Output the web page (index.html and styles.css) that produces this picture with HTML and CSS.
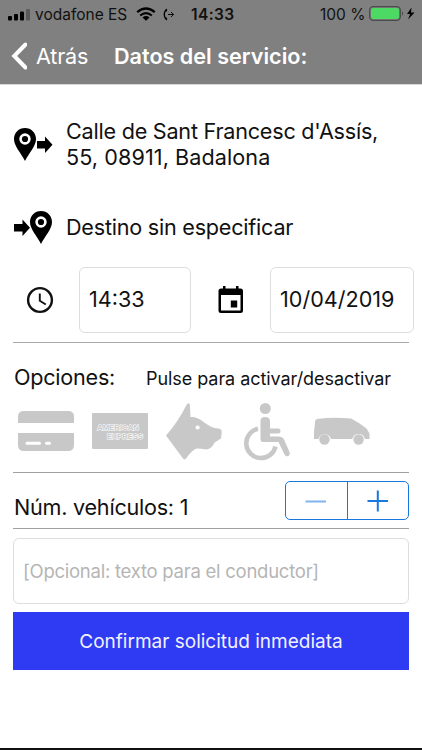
FILE: index.html
```html
<!DOCTYPE html>
<html lang="es">
<head>
<meta charset="utf-8">
<title>Datos del servicio</title>
<link rel="stylesheet" href="styles.css">
</head>
<body>
<header class="header">
  <div class="status">
    <svg class="signal" width="22" height="12" viewBox="0 0 22 12"><rect x="0" y="7" width="4" height="4.500" rx="1"/><rect x="6" y="5" width="4" height="6.500" rx="1"/><rect x="12" y="2.500" width="4" height="9" rx="1"/><rect x="18" y="0" width="4" height="11.500" rx="1" opacity=".3"/></svg>
    <span class="carrier">vodafone ES</span>
    <svg class="wifi" width="20" height="14" viewBox="0 0 20 14"><path d="M1.200 5.200Q10-2.200 18.800 5.200M4.200 8.500Q10 3.800 15.800 8.500" fill="none" stroke="#000" stroke-width="2.200"/><path d="M6.500 10.500Q10 7.700 13.500 10.500L10 13.800Z"/></svg>
    <svg class="forward" width="12" height="13" viewBox="0 0 12 13"><path d="M3.500 .6C-.3 3.500-.3 9.500 3.500 12.400L4.300 11 3.300 9.200H2.500C1.800 7.400 1.800 5.600 2.500 3.800H3.300L4.300 2Z"/><path d="M5 6.500H10.500M8 4l2.600 2.500L8 9" fill="none" stroke="#000" stroke-width=".9"/></svg>
    <span class="clock">14:33</span>
    <span class="percent">100 %</span>
    <svg class="battery" width="48" height="16" viewBox="0 0 48 16"><rect x=".7" y=".7" width="30.600" height="13.600" rx="3.500" fill="none" stroke="#4b4b4b" stroke-width="1.300"/><rect x="2" y="2" width="28" height="11" rx="2.200" fill="#4cd964"/><path d="M33 5Q35 7.500 33 10Z" fill="#444"/><path d="M42.500 1.500L38 8h3.200L39 13.500 45.500 6.500H42Z"/></svg>
  </div>
  <nav class="nav">
    <svg class="chevron" width="17" height="30" viewBox="0 0 17 30"><path d="M15.500 3.500L4.200 15 15.500 26.500" fill="none" stroke="#fff" stroke-width="4" stroke-linecap="round"/></svg>
    <span class="back">Atrás</span>
    <h1 class="title">Datos del servicio:</h1>
  </nav>
</header>
<main class="main">
  <section class="place origin">
    <svg width="40" height="34" viewBox="0 0 40 34"><path fill-rule="evenodd" d="M11 0C4.800 0 0 4.800 0 11 0 18 7 25 11 33 15 25 22 18 22 11 22 4.800 17.200 0 11 0ZM11 5.300A5.700 5.700 0 1 1 11 16.700 5.700 5.700 0 1 1 11 5.300Z"/><circle cx="11" cy="11" r="3.100"/><path d="M23 13H31V8.500L38.500 16.800 31 25V20.500H23Z"/></svg>
    <p class="address">Calle de Sant Francesc d'Assís,<br><span class="locality">55, 08911, Badalona</span></p>
  </section>
  <section class="place target">
    <svg width="40" height="34" viewBox="0 0 40 34"><path fill-rule="evenodd" d="M27 0C20.800 0 16 4.800 16 11 16 18 23 25 27 33 31 25 38 18 38 11 38 4.800 33.200 0 27 0ZM27 5.300A5.700 5.700 0 1 1 27 16.700 5.700 5.700 0 1 1 27 5.300Z"/><circle cx="27" cy="11" r="3.100"/><path d="M0 13H8.500V8.500L16 16.800 8.500 25V20.500H0Z"/></svg>
    <p class="destination">Destino sin especificar</p>
  </section>
  <section class="when">
    <svg class="clock-icon" width="28" height="28" viewBox="0 0 28 28"><circle cx="14" cy="14" r="11.900" fill="none" stroke="#111" stroke-width="2.400"/><path d="M13.800 7.500V14.800L19.800 18.500" fill="none" stroke="#111" stroke-width="1.900"/></svg>
    <div class="field time">14:33</div>
    <svg class="calendar-icon" width="26" height="28" viewBox="0 0 26 28"><path fill-rule="evenodd" d="M5 0H7.500V2.500H18V0H20.500V2.500H22.500Q25 2.500 25 5V24.500Q25 27 22.500 27H3Q.500 27 .500 24.500V5Q.500 2.500 3 2.500H5ZM3 9V24.500H22.500V9Z"/><rect x="12.800" y="14.500" width="6.400" height="7"/></svg>
    <div class="field date">10/04/2019</div>
  </section>
  <section class="options">
    <div class="options-head"><h2 class="label options-label">Opciones:</h2><span class="hint">Pulse para activar/desactivar</span></div>
    <div class="icons">
      <svg width="56" height="60" viewBox="0 0 56 60"><path d="M0 22V15.500Q0 10 6 10H50Q56 10 56 15.500V22ZM0 32H56V44Q56 50 50 50H6Q0 50 0 44Z"/><path d="M9 42.200H21.500M28.500 42.200H31.500" stroke="#fff" stroke-width="3" stroke-linecap="round"/></svg>
      <svg width="56" height="60" viewBox="0 0 56 60"><rect y="12" width="56" height="36" rx="1"/><g class="amex"><text x="5" y="28.500" textLength="42" lengthAdjust="spacingAndGlyphs">AMERICAN</text><text x="15" y="37.500" textLength="36" lengthAdjust="spacingAndGlyphs">EXPRESS</text></g></svg>
      <svg width="56" height="60" viewBox="0 0 56 60"><path d="M0 34.500Q12 21 20.500 4Q21.800 1.200 23.800 3L24.500 16Q31 15.500 37 20.500Q45 27 52 27.500Q56 27.500 55.700 31.500L55 37.500 51 40Q48.500 41 48 42.500Q45.500 48 40 48.500Q35 47.500 31 47.500Q26 48.500 20.500 57Q18.800 59.500 17 57.500Z"/><circle cx="31.600" cy="26.500" r="2.100" fill="#fff"/></svg>
      <svg width="56" height="60" viewBox="0 0 56 60"><circle cx="25.300" cy="7.500" r="5.500"/><path d="M18 27.800A14.800 14.800 0 1 0 35.500 45.500" fill="none" stroke="#c8c8c8" stroke-width="4.500"/><path d="M20.500 19.500Q20.500 16 25 16Q30 16 30 20V27.500H38Q40.500 27.500 40.500 30T38 32.500H30V35.500H38.500Q42.500 35.500 44 38.500L49.500 51Q50.500 54 48 55T44.500 53.500L38.500 41H23Q20.500 41 20.500 37.500Z"/></svg>
      <svg width="56" height="60" viewBox="0 0 56 60"><path d="M3 18Q18 16 37 17.500Q44 21 52.500 27.500L55.500 32.500V38H51A6.500 6.500 0 0 0 38.300 38H17A6.500 6.500 0 0 0 4.500 38H0V31L1.200 20Q1.500 18.500 3 18Z"/><circle cx="10.500" cy="38.500" r="5.200"/><circle cx="44.600" cy="38.500" r="5.200"/></svg>
    </div>
  </section>
  <section class="vehicles">
    <h2 class="label vehicles-label">Núm. vehículos: 1</h2>
    <div class="stepper"><div class="step minus"><svg width="22" height="22" viewBox="0 0 22 22"><path d="M.500 11.500H21"/></svg></div><div class="step"><svg width="22" height="22" viewBox="0 0 22 22"><path d="M.500 11H21M10.800 .5V21.500"/></svg></div></div>
  </section>
  <div class="notes"><span>[Opcional: texto para el conductor]</span></div>
  <div class="confirm"><span>Confirmar solicitud inmediata</span></div>
</main>
<footer class="edge"></footer>
</body>
</html>
```
FILE: styles.css
```css
* { box-sizing: border-box; }
body { margin: 0; width: 422px; height: 750px; display: flex; flex-direction: column; overflow: hidden; background: #fff; color: #111; font-family: Inter, "Liberation Sans", sans-serif; font-size: 21.6px; white-space: nowrap; }
h1, h2, p { margin: 0; font-weight: 400; font-size: inherit; }
svg { display: block; flex: none; }
.header { height: 85px; background: #808080; border-bottom: 1px solid #d8d8d8; }
.status { height: 28px; display: flex; align-items: center; padding-left: 8px; font-size: 15.5px; color: #111; }
.carrier { width: 101px; margin-left: 5px; }
.signal { margin-top: 1px; }
.forward { margin-left: 7px; }
.clock { width: 56px; margin-left: 16px; font-weight: 600; letter-spacing: .4px; }
.percent { width: 48px; margin-left: 73px; }
.battery { margin-left: 1px; }
.nav { height: 56px; display: flex; align-items: center; padding-left: 10px; color: #fff; }
.back { width: 78px; margin-left: 9px; letter-spacing: -.2px; }
.title { font-weight: 600; letter-spacing: 0; }
.main { height: 663px; padding: 0 13px; }
.place { display: flex; align-items: center; letter-spacing: -.23px; }
.place svg { margin-left: 1px; }
.place p { margin-left: 12px; line-height: 26px; }
.origin { height: 118px; }
.origin svg { margin-top: 2px; }
.locality { letter-spacing: .08px; }
.target { height: 48px; }
.target svg { margin-top: 2px; }
.when { height: 92px; display: flex; align-items: center; padding: 16px 0 9px; border-bottom: 1px solid #a8a8a8; }
.clock-icon { margin-left: 13px; }
.field { flex: none; height: 66px; display: flex; align-items: center; padding: 0 9px 2px; border: 1px solid #ddd; border-radius: 6px; }
.time { width: 112px; margin-left: 25px; }
.calendar-icon { margin: 0 26px 0 27px; }
.date { width: 144px; }
.options { height: 130px; border-bottom: 1px solid #a0a0a0; }
.options-head { height: 58px; display: flex; align-items: center; padding: 9px 0 0 1px; }
.label { color: #111; letter-spacing: -.24px; }
.options-label { width: 132px; }
.hint { font-size: 18px; padding-top: 4px; letter-spacing: -.06px; }
.icons { display: flex; padding-left: 5px; gap: 18px; fill: #c8c8c8; }
.amex { font-family: "Liberation Sans", sans-serif; font-size: 7.5px; font-weight: 700; fill: #c8c8c8; stroke: #fff; stroke-width: 1px; paint-order: stroke; }
.vehicles { height: 56px; display: flex; align-items: center; justify-content: space-between; border-bottom: 1px solid #a0a0a0; }
.vehicles-label { padding: 12px 0 0 1px; }
.stepper { width: 124px; height: 39px; display: flex; border: 1.5px solid #1878df; border-radius: 5px; }
.step { flex: 1; display: flex; align-items: center; justify-content: center; fill: none; stroke: #1878df; stroke-width: 2; }
.minus { border-right: 1px solid #1878df; }
.minus svg { opacity: .55; }
.notes { height: 66px; margin-top: 9px; display: flex; align-items: center; padding: 0 9px 1px; border: 1px solid #ddd; border-radius: 6px; color: #b5b5b5; font-size: 18.5px; letter-spacing: -.25px; }
.confirm { height: 58px; margin-top: 8px; display: flex; align-items: center; justify-content: center; background: #2f3af3; color: #f2f2ff; font-size: 19px; }
.edge { height: 2px; background: #111; }
```
